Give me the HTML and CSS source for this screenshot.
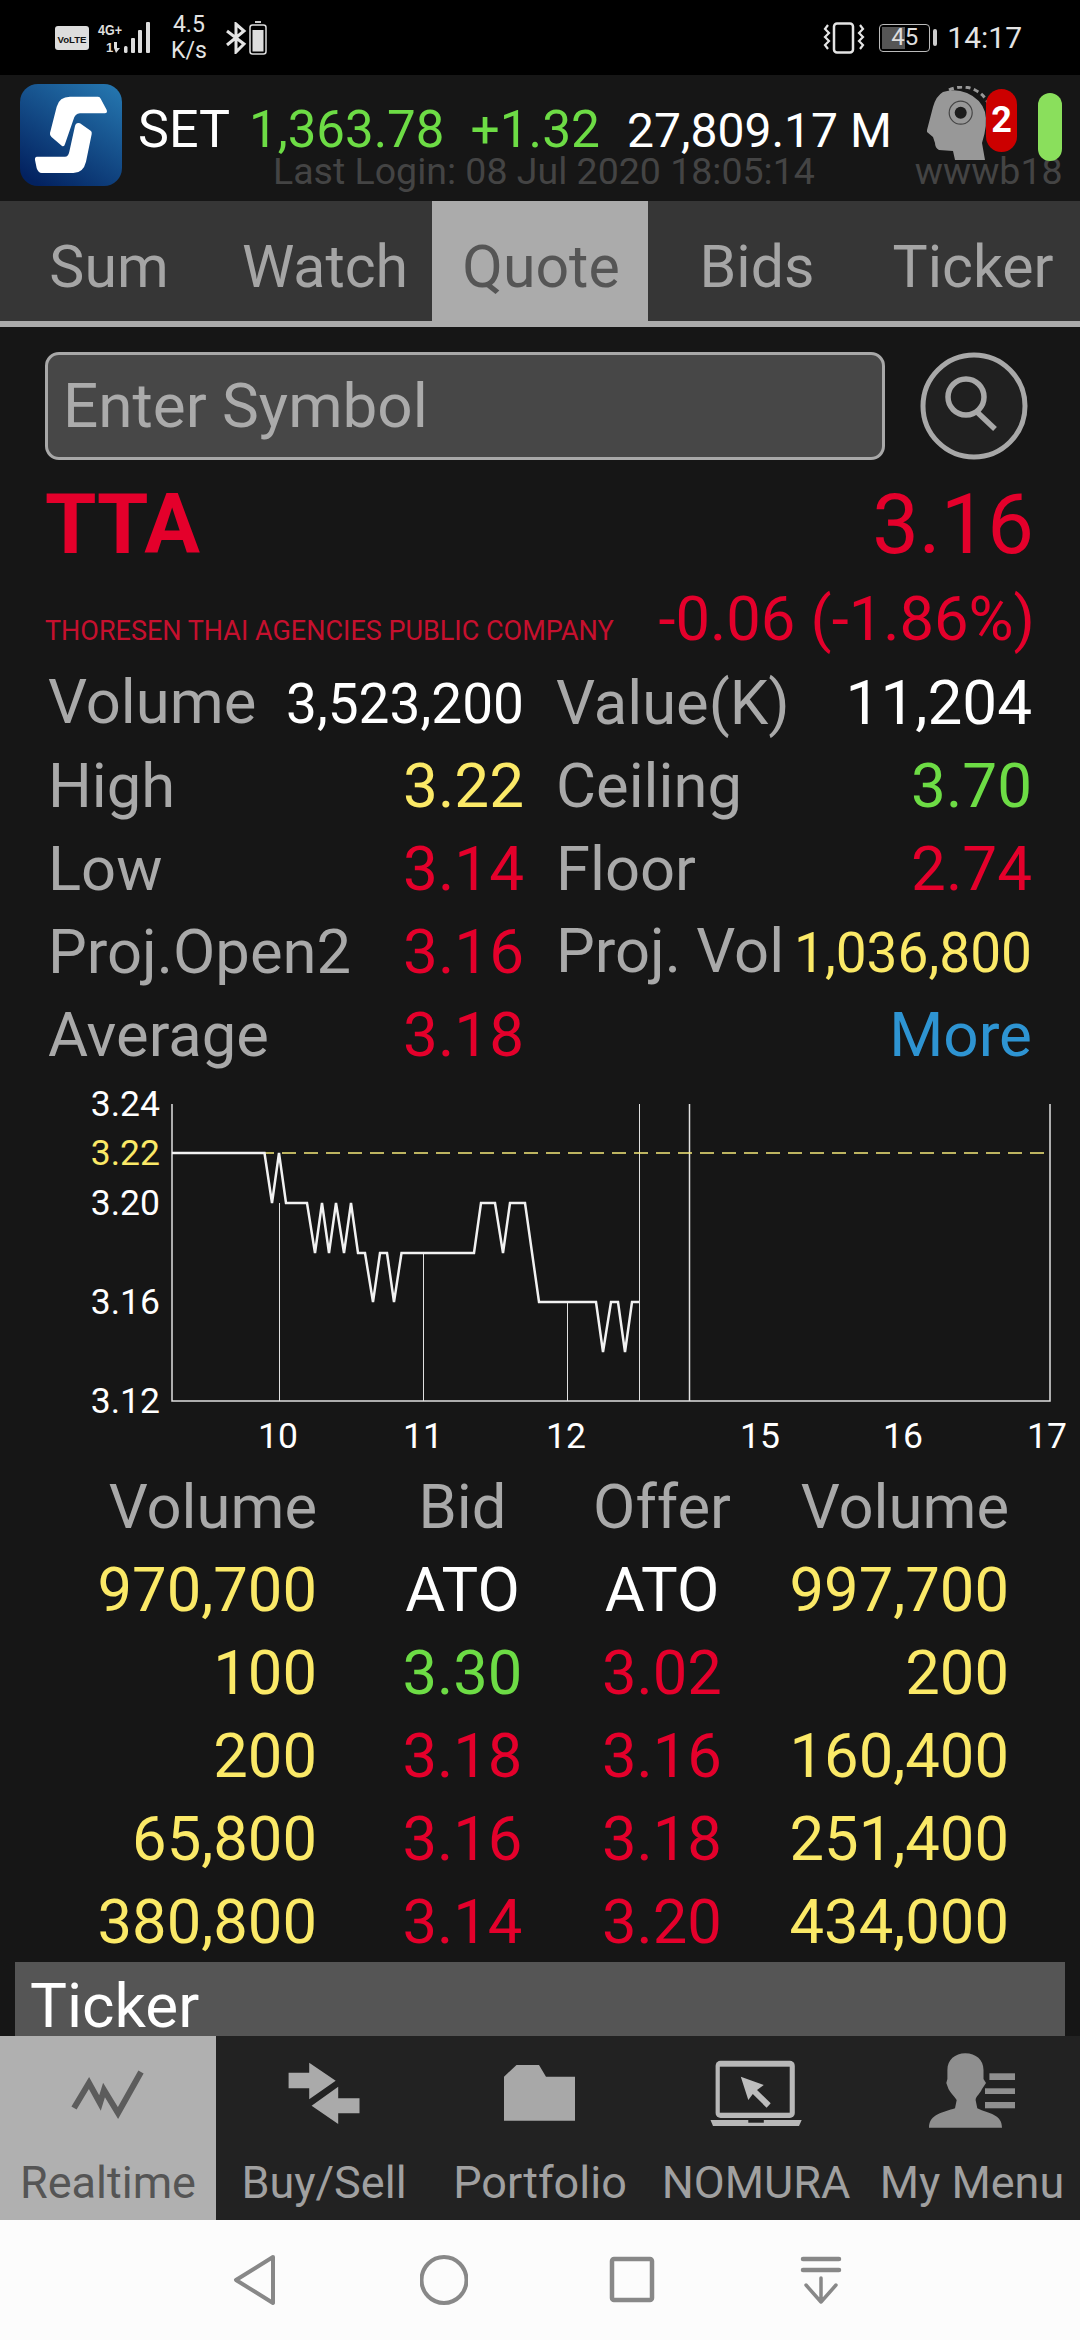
FILE: index.html
```html
<!DOCTYPE html>
<html lang="en">
<head>
<meta charset="utf-8">
<title>Quote</title>
<link rel="stylesheet" href="styles.css">
</head>
<body>
<div class="app">
  <header class="status">
    <div class="status-left">
      <svg class="ico-volte" viewBox="0 0 34 24"><rect width="34" height="24" rx="3" fill="#ddd"/><text x="17" y="16.500" text-anchor="middle" textLength="29" lengthAdjust="spacingAndGlyphs" class="volte-t">VoLTE</text></svg>
      <svg class="ico-signal" viewBox="0 0 56 32">
        <text x="1" y="13" textLength="24" lengthAdjust="spacingAndGlyphs" class="sig-t">4G+</text>
        <text x="9" y="30" class="sig-t2">1</text>
        <path d="M17 20h3v6h3l-4 5-2-5z" fill="#ddd"/>
        <g fill="#ddd"><rect x="27" y="24" width="3.500" height="7" rx="1.500"/><rect x="34" y="16" width="4" height="15" rx="1"/><rect x="41" y="8" width="4" height="23" rx="1"/><rect x="49" y="0" width="4" height="31" rx="1"/></g>
      </svg>
      <div class="speed"><span>4.5</span><span>K/s</span></div>
      <svg class="ico-bt" viewBox="0 0 22 32"><path d="M2 9l17 13-8 8V2l8 7L2 23" fill="none" stroke="#e4e4e4" stroke-width="3"/></svg>
      <svg class="ico-batt" viewBox="0 0 18 34"><rect x="6" y="0" width="6" height="2" fill="#ccc"/><rect x="1" y="4" width="16" height="29" rx="2.500" fill="none" stroke="#ddd" stroke-width="1.500"/><rect x="3.500" y="9" width="11" height="21.500" fill="#ddd"/></svg>
    </div>
    <div class="status-right">
      <svg class="ico-vib" viewBox="0 0 42 32"><rect x="11" y="1.500" width="19" height="29" rx="3" fill="none" stroke="#e4e4e4" stroke-width="2.500"/><path d="M5 3l-3 4 4 4-4 4 4 4-4 4 3 4M37 3l3 4-4 4 4 4-4 4 4 4-3 4" fill="none" stroke="#e4e4e4" stroke-width="2.200"/></svg>
      <div class="batt"><span class="batt-box"><span class="batt-fill"></span><span class="batt-num">45</span></span><span class="batt-tip"></span></div>
      <span class="time">14:17</span>
    </div>
  </header>

  <section class="topbar">
    <svg class="logo" viewBox="0 0 102 102">
      <defs><linearGradient id="lg" x1="0.85" y1="0" x2="0.2" y2="1"><stop offset="0" stop-color="#2474ad"/><stop offset="1" stop-color="#032260"/></linearGradient></defs>
      <rect width="102" height="102" rx="18" fill="url(#lg)"/>
      <path d="M50 12.700H78q2 0 2.700 2L86.700 26q1 3.300-2 3.300H60Q55 29.300 53.300 36L45 60q-.7 3-3 2L31.500 53q-2-1.500-1.500-4L36.700 22.700Q39.300 12.700 50 12.700zM60 39.300L71 47q1 1 .7 3L66 77.700Q63.300 89 53.300 89H21.700Q18.300 89 16.700 84.300L15 76q-.5-3 2-3.300H45Q48.300 72.700 49.300 67.700L55 42q1-4 5-2.700z" fill="#fff"/>
    </svg>
    <div class="ticker-info">
      <div class="index-line">
        <span class="idx-name">SET</span>
        <span class="idx-val">1,363.78</span>
        <span class="idx-chg">+1.32</span>
        <span class="idx-vol">27,809.17 M</span>
      </div>
      <div class="login-line">
        <span>Last Login: 08 Jul 2020 18:05:14</span>
        <span class="login-user">wwwb18</span>
      </div>
    </div>
    <div class="head-over">
      <svg class="head" viewBox="0 0 66 76"><path d="M0 44L6 21Q9 10 16 6 28 2 40 7 54 13 58 26 61 38 55 57L58 74H28L26 65 12 64Q8 62 8 57L6 51 0 46z" fill="#989898"/><circle cx="33.700" cy="26.700" r="11.500" fill="none" stroke="#444" stroke-width="1.200"/><circle cx="33.700" cy="26.700" r="6" fill="#1c1c1c"/><path d="M22 4Q36-2 48 4 58 9 62 19" fill="none" stroke="#989898" stroke-width="3" stroke-dasharray="5 3.500"/></svg>
      <span class="badge">2</span>
      <span class="pill"></span>
    </div>
  </section>

  <nav class="tabs">
    <span class="tab">Sum</span>
    <span class="tab">Watch</span>
    <span class="tab tab-on">Quote</span>
    <span class="tab">Bids</span>
    <span class="tab">Ticker</span>
  </nav>

  <main class="content">
    <div class="search-row">
      <div class="search-input">Enter Symbol</div>
      <svg class="search-btn" viewBox="0 0 108 108"><circle cx="54" cy="54" r="51" fill="#202020" stroke="#a8a8a8" stroke-width="5"/><circle cx="46" cy="45" r="18" fill="none" stroke="#a8a8a8" stroke-width="5.500"/><path d="M57 60l18 17" stroke="#a8a8a8" stroke-width="5.500" fill="none"/></svg>
    </div>
    <div class="sym-row">
      <span class="sym">TTA</span>
      <span class="last">3.16</span>
    </div>
    <div class="name-row">
      <span class="co-name">THORESEN THAI AGENCIES PUBLIC COMPANY</span>
      <span class="chg">-0.06 (-1.86%)</span>
    </div>
    <div class="stats">
      <div class="pair"><span class="lbl">Volume</span><span class="small white">3,523,200</span></div>
      <div class="pair"><span class="lbl">Value(K)</span><span class="white">11,204</span></div>
      <div class="pair"><span class="lbl">High</span><span class="yellow">3.22</span></div>
      <div class="pair"><span class="lbl">Ceiling</span><span class="green">3.70</span></div>
      <div class="pair"><span class="lbl">Low</span><span class="red">3.14</span></div>
      <div class="pair"><span class="lbl">Floor</span><span class="red">2.74</span></div>
      <div class="pair"><span class="lbl">Proj.Open2</span><span class="red">3.16</span></div>
      <div class="pair"><span class="lbl">Proj. Vol</span><span class="small yellow">1,036,800</span></div>
      <div class="pair"><span class="lbl">Average</span><span class="red">3.18</span></div>
      <div class="pair more"><span class="blue">More</span></div>
    </div>

    <svg class="chart" viewBox="0 -10 1080 386">
      <g class="ylab">
        <text x="160" y="26">3.24</text>
        <text x="160" y="75" class="yl">3.22</text>
        <text x="160" y="125">3.20</text>
        <text x="160" y="224">3.16</text>
        <text x="160" y="323">3.12</text>
      </g>
      <g class="xlab">
        <text x="278" y="358">10</text>
        <text x="423" y="358">11</text>
        <text x="566" y="358">12</text>
        <text x="760" y="358">15</text>
        <text x="903" y="358">16</text>
        <text x="1047" y="358">17</text>
      </g>
      <path class="grid" d="M172 14V311H1050V14M689.500 14V311"/>
      <path class="grid thin" d="M279.500 113V311M423.500 163V311M567.500 212V311M639.500 14V311"/>
      <path class="dash" d="M172 63H1050"/>
      <polyline class="price" points="172,63 264.500,63 272,113 279,63 286,113 307,113 315,163 322,113 329,163 336,113 344,163 351,113 358,163 365,163 373,212 380,163 387,163 394,212 401.500,163 474,163 481,113 495,113 503,163 510,113 525,113 539,212 596,212 603,262 611,212 618,212 625,262 632,212 639,212"/>
    </svg>

    <div class="bids">
      <span class="bh r">Volume</span><span class="bh c">Bid</span><span class="bh c">Offer</span><span class="bh r">Volume</span>
      <span class="r yellow">970,700</span><span class="c white">ATO</span><span class="c white">ATO</span><span class="r yellow">997,700</span>
      <span class="r yellow">100</span><span class="c green">3.30</span><span class="c red">3.02</span><span class="r yellow">200</span>
      <span class="r yellow">200</span><span class="c red">3.18</span><span class="c red">3.16</span><span class="r yellow">160,400</span>
      <span class="r yellow">65,800</span><span class="c red">3.16</span><span class="c red">3.18</span><span class="r yellow">251,400</span>
      <span class="r yellow">380,800</span><span class="c red">3.14</span><span class="c red">3.20</span><span class="r yellow">434,000</span>
    </div>

    <div class="ticker-bar">Ticker</div>
  </main>

  <nav class="bottom">
    <div class="bt bt-on">
      <svg class="bt-ico" viewBox="0 0 216 110"><path d="M74 72L89 47l11 20 4-13 14 23 23-41" fill="none" stroke="#5c5c5c" stroke-width="6"/></svg>
      <span>Realtime</span>
    </div>
    <div class="bt">
      <svg class="bt-ico" viewBox="0 0 216 110"><path d="M72.600 36.700H93.200V26.700L119.700 44.700 93.200 63.300V52.300H72.600zM122.200 50.700V62.300H143.500V77.300H122.200V88L95.600 69.700z" fill="#aaa"/></svg>
      <span>Buy/Sell</span>
    </div>
    <div class="bt">
      <svg class="bt-ico" viewBox="0 0 216 110"><path d="M72 40.700L84.500 29H107L114 40.700H143V84.700H72z" fill="#a8a8a8"/></svg>
      <span>Portfolio</span>
    </div>
    <div class="bt">
      <svg class="bt-ico" viewBox="0 0 216 110"><rect x="67.600" y="24.700" width="79.200" height="57.300" rx="5" fill="#b8b8b8"/><rect x="71.800" y="30.700" width="69.900" height="46" fill="#222"/><path d="M62.500 84H153.700L151 90H65z" fill="#b8b8b8"/><rect x="100.300" y="84" width="15.500" height="2.700" fill="#222"/><path d="M92.800 40.700L115.800 49 109 54 122.700 67.300 118.600 71.700 104.800 58 100.300 64z" fill="#bdbdbd"/></svg>
      <span>NOMURA</span>
    </div>
    <div class="bt">
      <svg class="bt-ico" viewBox="0 0 216 110"><path d="M101.300 17.300C112 17.300 119.500 24 119.500 34V43L122 47 118 53C116 58 112 60 111.600 64L113.300 72.300C125 78 138 78 138 91.700H65C65 78 80 76 91 72.300L92.700 64C90 60 86 56 84.500 53L82.300 47 83.400 43V34C83.400 24 91 17.300 101.300 17.300Z" fill="#8f8f8f"/><g fill="#8f8f8f"><rect x="125.400" y="37.300" width="25.600" height="6.700"/><rect x="121" y="52.300" width="30" height="5.700"/><rect x="121" y="66" width="30" height="6.300"/></g></svg>
      <span>My Menu</span>
    </div>
  </nav>

  <footer class="sysnav">
    <svg class="sys" viewBox="0 0 48 52"><path d="M42 3L5 26l37 23z" fill="none" stroke="#888" stroke-width="4" stroke-linejoin="round"/></svg>
    <svg class="sys" viewBox="0 0 48 52"><ellipse cx="24" cy="26" rx="22.500" ry="23" fill="none" stroke="#888" stroke-width="4"/></svg>
    <svg class="sys" viewBox="0 0 48 52"><rect x="4" y="5" width="40" height="41" rx="2" fill="none" stroke="#888" stroke-width="4.500"/></svg>
    <svg class="sys" viewBox="0 0 48 52"><path d="M6 5h36M6 16h36" stroke="#888" stroke-width="4.500" stroke-linecap="round"/><path d="M24 24v24M9 31l15 17 15-17" fill="none" stroke="#888" stroke-width="3.500" stroke-linecap="round" stroke-linejoin="round"/></svg>
  </footer>
</div>
</body>
</html>
```
FILE: styles.css
```css
* { box-sizing: border-box; }
html, body { margin: 0; padding: 0; }
body { width: 1080px; height: 2340px; overflow: hidden; background: #161616; font-family: Roboto, "Liberation Sans", sans-serif; }
.app { display: flex; flex-direction: column; width: 1080px; height: 2340px; }

.status { height: 75px; background: #000; display: flex; justify-content: space-between; align-items: center; padding: 0 58px 0 55px; color: #e4e4e4; flex: none; }
.status-left, .status-right { display: flex; align-items: center; }
.ico-volte { width: 34px; height: 24px; }
.volte-t { font: 700 9.500px "Liberation Sans", sans-serif; fill: #111; }
.ico-signal { width: 56px; height: 32px; margin-left: 8px; }
.sig-t { font: 700 15px "Liberation Sans", sans-serif; fill: #ddd; }
.sig-t2 { font: 700 13px "Liberation Sans", sans-serif; fill: #ddd; }
.speed { display: flex; flex-direction: column; font-size: 23px; line-height: 26px; margin-left: 18px; align-items: center; }
.ico-bt { width: 22px; height: 32px; margin-left: 18px; }
.ico-batt { width: 18px; height: 34px; margin-left: 2px; }
.ico-vib { width: 42px; height: 32px; }
.batt { display: flex; align-items: center; margin-left: 14px; }
.batt-box { position: relative; width: 51px; height: 28px; border: 1.500px solid #bbb; border-radius: 4px; display: block; }
.batt-fill { position: absolute; left: 2px; top: 2px; bottom: 2px; width: 23px; background: #555; }
.batt-num { position: absolute; inset: 0; text-align: center; font-size: 24px; line-height: 25px; color: #ddd; }
.batt-tip { width: 4px; height: 17px; background: #ccc; border-radius: 2px; margin-left: 3px; }
.time { font-size: 30px; margin-left: 10px; }

.topbar { position: relative; height: 126px; background: #161616; flex: none; display: flex; padding: 9px 0 0 20px; }
.logo { width: 102px; height: 102px; flex: none; }
.ticker-info { padding-top: 16px; }
.index-line { display: flex; align-items: baseline; height: 60px; line-height: 60px; white-space: nowrap; position: relative; z-index: 1; }
.idx-name { font-size: 52px; color: #fff; margin-left: 16px; }
.idx-val { font-size: 51px; color: #6ddc45; margin-left: 19px; }
.idx-chg { font-size: 51.500px; color: #6ddc45; margin-left: 26px; }
.idx-vol { font-size: 48px; color: #fff; margin-left: 27px; }
.login-line { display: flex; white-space: nowrap; font-size: 37.500px; line-height: 40px; color: #444; margin-top: -9px; }
.login-line span:first-child { margin-left: 151px; }
.login-user { margin-left: 100px; }
.head-over { position: absolute; left: 925px; top: 8px; width: 155px; height: 90px; }
.head { position: absolute; left: 2px; top: 3px; width: 66px; height: 76px; }
.badge { position: absolute; left: 61px; top: 6px; width: 31px; height: 63px; border-radius: 16px; background: #cc0000; color: #fff; font-size: 36px; font-weight: 700; text-align: center; line-height: 63px; }
.pill { position: absolute; left: 113px; top: 10px; width: 24px; height: 68px; border-radius: 12px; background: #8adf5c; }

.tabs { height: 126px; flex: none; display: grid; grid-template-columns: repeat(5, 216px); background: #363636; border-bottom: 6px solid #ababab; }
.tab { display: flex; align-items: center; justify-content: center; font-size: 59px; color: #a5a5a5; padding: 10px 0 0 2px; }
.tab-on { background: #ababab; color: #555; }

.content { flex: 1; min-height: 0; overflow: hidden; background: #161616; padding-top: 25px; }
.search-row { display: flex; align-items: center; margin-left: 45px; height: 108px; }
.search-input { width: 840px; height: 108px; background: #474747; border: 3px solid #a8a8a8; border-radius: 14px; font-size: 62px; color: #ababab; padding-left: 15px; line-height: 102px; }
.search-btn { width: 108px; height: 108px; margin-left: 35px; }
.sym-row { display: flex; justify-content: space-between; align-items: baseline; padding: 0 46px 0 45px; height: 96px; line-height: 96px; margin-top: 17px; color: #e4002b; }
.sym { font-size: 83px; font-weight: 700; }
.last { font-size: 83px; }
.name-row { display: flex; justify-content: space-between; align-items: baseline; padding: 0 45px 0 45px; color: #e4002b; height: 70px; line-height: 70px; margin-top: 11px; white-space: nowrap; }
.co-name { font-size: 27px; color: #c6102e; }
.chg { font-size: 61.500px; }

.stats { display: grid; grid-template-columns: 476px 476px; column-gap: 32px; grid-auto-rows: 83px; margin: 7px 0 0 48px; font-size: 62px; line-height: 83px; white-space: nowrap; }
.pair { display: flex; justify-content: space-between; align-items: baseline; }
.more { justify-content: flex-end; }
.lbl { color: #a9a9a9; font-size: 61.500px; }
.small { font-size: 55px; }
.white { color: #fff; }
.yellow { color: #fbe967; }
.green { color: #6ddc45; }
.red { color: #e4002b; }
.blue { color: #2e94d2; }

.chart { display: block; width: 1080px; height: 386px; margin-top: 4px; }
.ylab text { font-size: 35.500px; fill: #fff; text-anchor: end; }
.ylab .yl { fill: #fbe967; }
.xlab text { font-size: 35.500px; fill: #fff; text-anchor: middle; }
.grid { fill: none; stroke: #e0e0e0; stroke-width: 1.500; }
.grid.thin { stroke-width: 1; }
.dash { stroke: #f5e97a; stroke-width: 1.500; stroke-dasharray: 14 8; fill: none; }
.price { fill: none; stroke: #f2f2f2; stroke-width: 2.500; stroke-linejoin: miter; }

.bids { display: grid; grid-template-columns: 363px 199px 200px 247px; grid-auto-rows: 83px; font-size: 61.500px; line-height: 83px; white-space: nowrap; }
.bids .c { text-align: center; }
.bids .r { text-align: right; }
.bids span:nth-child(4n+1) { padding-right: 46px; }
.bh { color: #a9a9a9; }

.ticker-bar { height: 74px; margin: -2px 15px 0; background: #555; color: #fff; font-size: 62px; line-height: 60px; padding: 14px 0 0 15px; }

.bottom { height: 184px; flex: none; display: grid; grid-template-columns: repeat(5, 216px); background: #222; }
.bt { display: flex; flex-direction: column; align-items: center; color: #a0a0a0; font-size: 45px; white-space: nowrap; }
.bt span { line-height: 52px; margin-top: auto; margin-bottom: 11px; }
.bt-ico { width: 216px; height: 110px; flex: none; }
.bt-on { background: #b0b0b0; color: #555; }

.sysnav { height: 120px; flex: none; background: #fcfcfc; display: grid; grid-template-columns: repeat(4, 188.500px); justify-items: center; align-items: center; padding-left: 161px; }
.sys { width: 48px; height: 52px; }
```
